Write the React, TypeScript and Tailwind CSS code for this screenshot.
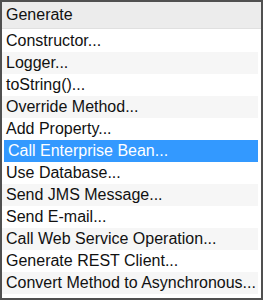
import React from "react";

const items = [
  "Constructor...",
  "Logger...",
  "toString()...",
  "Override Method...",
  "Add Property...",
  "Call Enterprise Bean...",
  "Use Database...",
  "Send JMS Message...",
  "Send E-mail...",
  "Call Web Service Operation...",
  "Generate REST Client...",
  "Convert Method to Asynchronous...",
];

export default function App() {
  return (
    <div
      className="w-[263px] h-[300px] border-2 border-[#505050] bg-white overflow-hidden flex flex-col"
      style={{ fontFamily: "'Liberation Sans', Arial, sans-serif" }}
    >
      <div className="h-[27px] bg-[#ececec] border-b border-[#e0e0e0] flex items-center pl-[4px] text-[16px] text-[#111]">
        Generate
      </div>
      <div className="flex flex-col pt-[1px] pr-[3px]">
        {items.map((t, i) => {
          const sel = i === 5;
          return (
            <div
              key={t}
              className={
                "h-[22px] flex items-center pl-[4px] text-[16px] leading-none whitespace-nowrap " +
                (sel
                  ? "bg-[#3399ff] text-white ml-[2px] pl-[2px]"
                  : i % 2 === 1
                  ? "bg-[#f6f6f6] text-[#111]"
                  : "bg-white text-[#111]")
              }
            >
              {t}
            </div>
          );
        })}
      </div>
    </div>
  );
}
